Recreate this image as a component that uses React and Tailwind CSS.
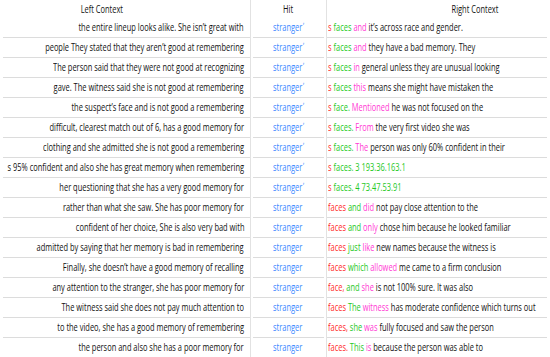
const R = 'text-[#ff2b2b]';
const G = 'text-[#1ec81e]';
const M = 'text-[#ff38d4]';

const rows = [
  ['the entire lineup looks alike. She isn\u2019t great with', true, [['s ', R], ['faces ', G], ['and ', M], ['it\u2019s across race and gender.']]],
  ['people They stated that they aren\u2019t good at remembering', true, [['s ', R], ['faces ', G], ['and ', M], ['they have a bad memory. They']]],
  ['The person said that they were not good at recognizing', true, [['s ', R], ['faces ', G], ['in ', M], ['general unless they are unusual looking']]],
  ['gave. The witness said she is not good at remembering', true, [['s ', R], ['faces ', G], ['this ', M], ['means she might have mistaken the']]],
  ['the suspect\u2019s face and is not good a remembering', true, [['s ', R], ['face. ', G], ['Mentioned ', M], ['he was not focused on the']]],
  ['difficult, clearest match out of 6, has a good memory for', true, [['s ', R], ['faces. ', G], ['From ', M], ['the very first video she was']]],
  ['clothing and she admitted she is not good a remembering', true, [['s ', R], ['faces. ', G], ['The ', M], ['person was only 60% confident in their']]],
  ['s 95% confident and also she has great memory when remembering', true, [['s ', R], ['faces. 3 193.36.163.1', G]]],
  ['her questioning that she has a very good memory for', true, [['s ', R], ['faces. 4 73.47.53.91', G]]],
  ['rather than what she saw. She has poor memory for', false, [['faces ', R], ['and ', G], ['did ', M], ['not pay close attention to the']]],
  ['confident of her choice, She is also very bad with', false, [['faces ', R], ['and ', G], ['only ', M], ['chose him because he looked familiar']]],
  ['admitted by saying that her memory is bad in remembering', false, [['faces ', R], ['just ', G], ['like ', M], ['new names because the witness is']]],
  ['Finally, she doesn\u2019t have a good memory of recalling', false, [['faces ', R], ['which ', G], ['allowed ', M], ['me came to a firm conclusion']]],
  ['any attention to the stranger, she has poor memory for', false, [['face, ', R], ['and ', G], ['she ', M], ['is not 100% sure. It was also']]],
  ['The witness said she does not pay much attention to', false, [['faces ', R], ['The ', G], ['witness ', M], ['has moderate confidence which turns out']]],
  ['to the video, she has a good memory of remembering', false, [['faces, ', R], ['she ', G], ['was ', M], ['fully focused and saw the person']]],
  ['the person and also she has a poor memory for', false, [['faces. ', R], ['This ', G], ['is ', M], ['because the person was able to']]],
];

function Squeeze({ origin, children }) {
  return (
    <span className={`inline-block shrink-0 whitespace-pre scale-x-[0.71] ${origin}`}>
      {children}
    </span>
  );
}

function Row({ left, quoted, right }) {
  return (
    <div className="flex h-[20px]">
      <div className="w-[251px] shrink-0 border-r border-[#e2e2e2] pl-[3px]">
        <div className="flex h-full items-center justify-end overflow-hidden border-b border-[#dcdcdc] pr-[6px]">
          <Squeeze origin="origin-right">{left}</Squeeze>
        </div>
      </div>
      <div className="w-[76px] shrink-0 border-r border-[#e2e2e2] px-[2px]">
        <div className="flex h-full items-center overflow-hidden border-b border-[#dcdcdc] pl-[20px] text-[#3a87ff]">
          <Squeeze origin="origin-left">
            stranger{quoted && <span className="relative -top-[2px] pl-[1px] text-[9px]">{'\u02bc'}</span>}
          </Squeeze>
        </div>
      </div>
      <div className="min-w-0 flex-1 pr-[3px]">
        <div className="flex h-full items-center overflow-hidden border-b border-[#dcdcdc] pl-[1px]">
          <Squeeze origin="origin-left">
            {right.map(([t, c], i) => (
              <span key={i} className={c || ''}>{t}</span>
            ))}
          </Squeeze>
        </div>
      </div>
    </div>
  );
}

export default function App() {
  return (
    <div className="h-[357px] w-[550px] overflow-hidden bg-white font-['Open_Sans',sans-serif] text-[10.5px] font-medium leading-none text-[#111]">
      <div className="flex h-[18px]">
        <div className="flex w-[251px] shrink-0 items-center justify-center border-r border-[#e2e2e2] pr-[46px]">
          <Squeeze origin="origin-center">Left Context</Squeeze>
        </div>
        <div className="flex w-[76px] shrink-0 items-center justify-center border-r border-[#e2e2e2]">
          <Squeeze origin="origin-center">Hit</Squeeze>
        </div>
        <div className="flex min-w-0 flex-1 items-center justify-center pl-[73px]">
          <Squeeze origin="origin-center">Right Context</Squeeze>
        </div>
      </div>
      {rows.map(([left, quoted, right], i) => (
        <Row key={i} left={left} quoted={quoted} right={right} />
      ))}
    </div>
  );
}
